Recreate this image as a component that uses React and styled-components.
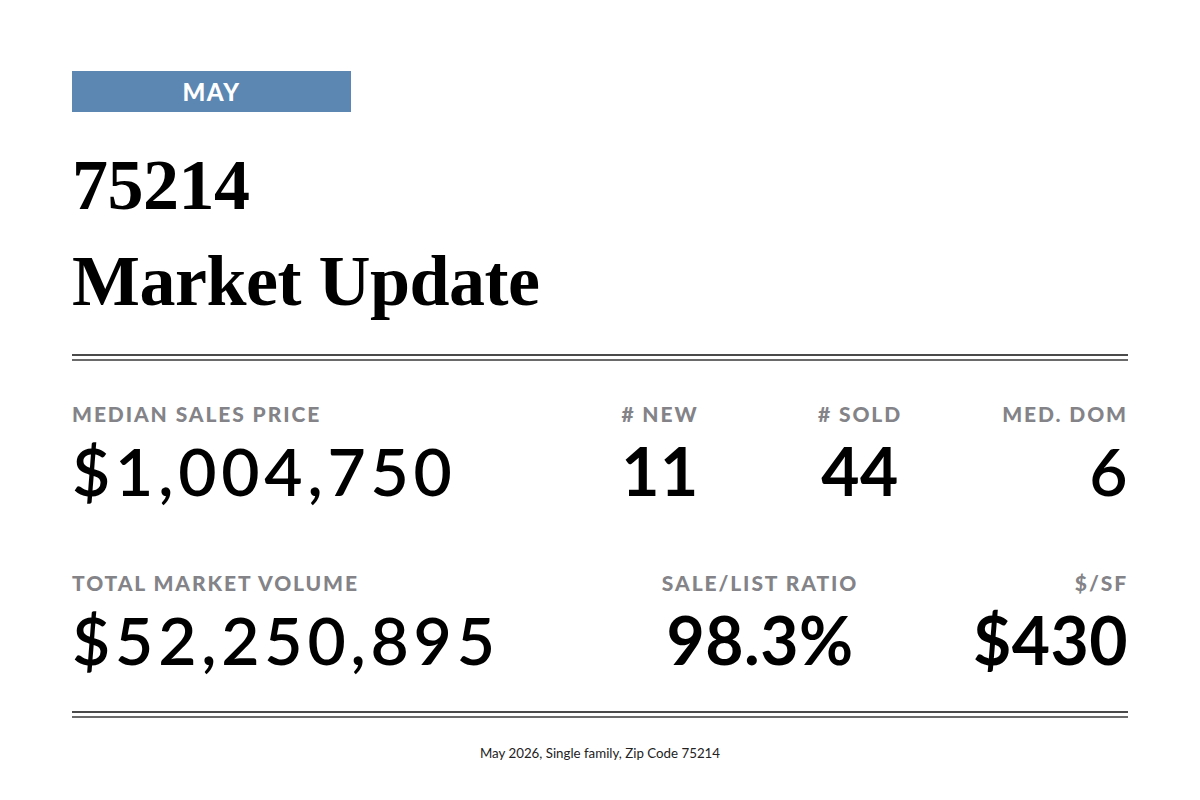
import React from "react";
import styled, { createGlobalStyle } from "styled-components";

const Global = createGlobalStyle`
  html, body { margin: 0; padding: 0; background: #ffffff; }
  body { font-family: "Lato", "Liberation Sans", sans-serif; color: #000; }
`;

const Page = styled.main`
  width: 1200px;
  height: 800px;
  box-sizing: border-box;
  padding: 71px 72px 0 72px;
  display: flex;
  flex-direction: column;
  background: #fff;
`;

const MonthBanner = styled.div`
  width: 279px;
  height: 41px;
  background: #5b87b2;
  display: flex;
  align-items: center;
  justify-content: center;
  color: #fff;
  font-family: "Lato", sans-serif;
  font-weight: 900;
  font-size: 24px;
  letter-spacing: 1.5px;
`;

const Title = styled.h1`
  margin: 25px 0 0 0;
  font-family: "Liberation Serif", "Times New Roman", serif;
  font-weight: 700;
  font-size: 72px;
  line-height: 96px;
  letter-spacing: -0.5px;
  color: #000;
`;

const DoubleRule = styled.div`
  height: 3px;
  border-top: 2px solid #4a4a4a;
  border-bottom: 2px solid #6a6a6a;
  margin-top: ${(p) => p.$top}px;
`;

const StatRow = styled.section`
  display: grid;
  grid-template-columns: ${(p) => p.$cols};
  margin-top: ${(p) => p.$top}px;
`;

const Stat = styled.div`
  display: flex;
  flex-direction: column;
  align-items: ${(p) =>
    p.$align === "center" ? "center" : p.$align === "right" ? "flex-end" : "flex-start"};
`;

const Label = styled.div`
  font-family: "Lato", sans-serif;
  font-weight: 900;
  font-size: 21px;
  line-height: 24px;
  letter-spacing: 1.9px;
  color: #838388;
  text-transform: uppercase;
  white-space: nowrap;
`;

const Value = styled.div`
  margin-top: 12px;
  font-family: "Lato", sans-serif;
  font-weight: ${(p) => (p.$heavy ? 700 : 600)};
  font-size: 66px;
  line-height: 66px;
  letter-spacing: ${(p) => (p.$spaced ? "4.8px" : "0.5px")};
  color: #000;
  white-space: nowrap;
`;

const Footer = styled.footer`
  margin-top: 27px;
  text-align: center;
  font-family: "Lato", sans-serif;
  font-size: 13.3px;
  line-height: 17px;
  color: #222;
`;

const row1 = [
  { label: "Median Sales Price", value: "$1,004,750", align: "left", spaced: true },
  { label: "# New", value: "11", align: "center", heavy: true },
  { label: "# Sold", value: "44", align: "center", heavy: true },
  { label: "Med. Dom", value: "6", align: "right" },
];

const row2 = [
  { label: "Total Market Volume", value: "$52,250,895", align: "left", spaced: true },
  { label: "Sale/List Ratio", value: "98.3%", align: "center", heavy: true },
  { label: "$/SF", value: "$430", align: "right", heavy: true },
];

function StatItem({ s }) {
  return (
    <Stat $align={s.align}>
      <Label>{s.label}</Label>
      <Value $heavy={s.heavy} $spaced={s.spaced}>
        {s.value}
      </Value>
    </Stat>
  );
}

export default function App() {
  return (
    <>
      <Global />
      <Page>
        <MonthBanner>MAY</MonthBanner>
        <Title>
          75214
          <br />
          Market Update
        </Title>
        <DoubleRule $top={25} />
        <StatRow $cols="1fr 200px 200px 168px" $top={41}>
          {row1.map((s) => (
            <StatItem key={s.label} s={s} />
          ))}
        </StatRow>
        <StatRow $cols="1fr 200px 268px" $top={67}>
          {row2.map((s) => (
            <StatItem key={s.label} s={s} />
          ))}
        </StatRow>
        <DoubleRule $top={38} />
        <Footer>May 2026, Single family, Zip Code 75214</Footer>
      </Page>
    </>
  );
}
